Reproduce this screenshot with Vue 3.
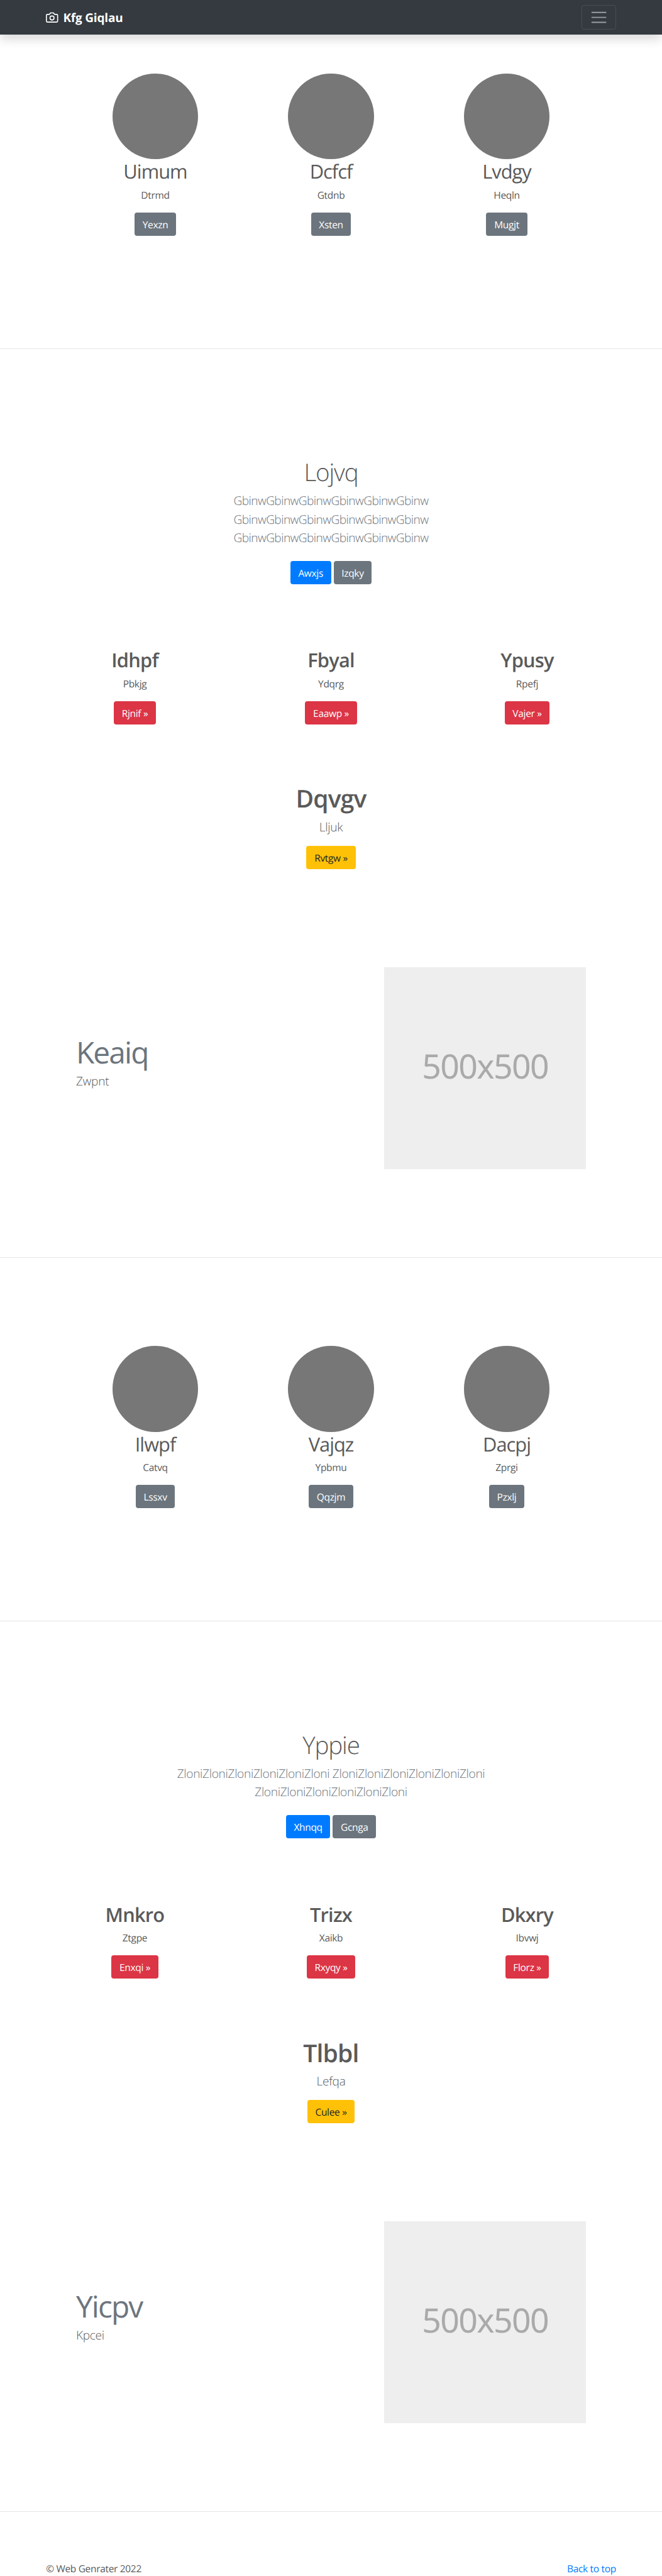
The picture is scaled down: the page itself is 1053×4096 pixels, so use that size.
<script setup>
const sections = [
  {
    circles: [['Uimum', 'Dtrmd', 'Yexzn'], ['Dcfcf', 'Gtdnb', 'Xsten'], ['Lvdgy', 'Heqln', 'Mugjt']],
    title: 'Lojvq',
    lead: 'GbinwGbinwGbinwGbinwGbinwGbinw GbinwGbinwGbinwGbinwGbinwGbinw GbinwGbinwGbinwGbinwGbinwGbinw',
    actions: ['Awxjs', 'Izqky'],
    columns: [['Idhpf', 'Pbkjg', 'Rjnif'], ['Fbyal', 'Ydqrg', 'Eaawp'], ['Ypusy', 'Rpefj', 'Vajer']],
    callout: ['Dqvgv', 'Lljuk', 'Rvtgw'],
    feature: ['Keaiq', 'Zwpnt'],
  },
  {
    circles: [['Ilwpf', 'Catvq', 'Lssxv'], ['Vajqz', 'Ypbmu', 'Qqzjm'], ['Dacpj', 'Zprgi', 'Pzxlj']],
    title: 'Yppie',
    airy: true,
    lead: 'ZloniZloniZloniZloniZloniZloni ZloniZloniZloniZloniZloniZloni ZloniZloniZloniZloniZloniZloni',
    actions: ['Xhnqq', 'Gcnga'],
    columns: [['Mnkro', 'Ztgpe', 'Enxqi'], ['Trizx', 'Xaikb', 'Rxyqy'], ['Dkxry', 'Ibvwj', 'Florz']],
    callout: ['Tlbbl', 'Lefqa', 'Culee'],
    feature: ['Yicpv', 'Kpcei'],
  },
]
</script>

<template>
  <div class="page">
    <header class="navbar">
      <a class="brand">
        <svg width="20" height="20" viewBox="0 0 24 24" fill="none" stroke="currentColor" stroke-width="2" stroke-linecap="round" stroke-linejoin="round">
          <path d="M23 19a2 2 0 0 1-2 2H3a2 2 0 0 1-2-2V8a2 2 0 0 1 2-2h4l2-3h6l2 3h4a2 2 0 0 1 2 2z" />
          <circle cx="12" cy="13" r="4" />
        </svg>
        <strong>Kfg Giqlau</strong>
      </a>
      <button class="toggler" aria-label="Toggle navigation">
        <svg width="30" height="30" viewBox="0 0 30 30" stroke="rgba(255,255,255,.5)" stroke-width="2" stroke-miterlimit="10">
          <path d="M3 7h24M3 15h24M3 23h24" />
        </svg>
      </button>
    </header>

    <main>
      <template v-for="s in sections" :key="s.title">
        <section class="circles">
          <div v-for="c in s.circles" :key="c[0]" class="cell">
            <div class="disc"></div>
            <h2>{{ c[0] }}</h2>
            <p>{{ c[1] }}</p>
            <a class="btn grey">{{ c[2] }}</a>
          </div>
        </section>
        <hr />
        <section class="intro">
          <h1>{{ s.title }}</h1>
          <p class="lead" :class="{ airy: s.airy }">{{ s.lead }}</p>
          <div class="actions">
            <a class="btn blue">{{ s.actions[0] }}</a>
            <a class="btn grey">{{ s.actions[1] }}</a>
          </div>
        </section>
        <section class="columns">
          <div v-for="c in s.columns" :key="c[0]" class="cell">
            <h2>{{ c[0] }}</h2>
            <p>{{ c[1] }}</p>
            <a class="btn red">{{ c[2] }} »</a>
          </div>
        </section>
        <section class="callout">
          <h1>{{ s.callout[0] }}</h1>
          <p class="lead">{{ s.callout[1] }}</p>
          <a class="btn yellow">{{ s.callout[2] }} »</a>
        </section>
        <section class="feature">
          <div class="copy">
            <h2>{{ s.feature[0] }}</h2>
            <p class="lead">{{ s.feature[1] }}</p>
          </div>
          <div class="placeholder"><span>500x500</span></div>
        </section>
        <hr />
      </template>
    </main>

    <footer>
      <span>© Web Genrater 2022</span>
      <a>Back to top</a>
    </footer>
  </div>
</template>

<style>
html, body { margin: 0; background: #fff; }
body { height: 4096px; overflow: hidden; }
</style>

<style scoped>
.page {
  zoom: 0.975;
  height: 4201px;
  overflow: hidden;
  font: 400 15.9px/24px 'Open Sans', 'Noto Sans', sans-serif;
  letter-spacing: -0.33px;
  text-rendering: geometricPrecision;
  color: #5a5a5a;
}
.page * { box-sizing: border-box; }
h1, h2, p { margin: 0; }
hr { margin: 0; height: 1px; border: 0; background: #e5e5e5; }

.navbar {
  position: relative;
  display: flex;
  justify-content: space-between;
  align-items: center;
  height: 56px;
  padding: 0 75px;
  background: #343a40;
  box-shadow: 0 8px 16px rgba(0, 0, 0, .15);
  color: #fff;
}
.brand { display: flex; align-items: center; font-size: 19.5px; letter-spacing: -0.2px; }
.brand svg { margin-right: 8px; }
.brand strong { font-weight: 700; padding-top: 2px; }
.toggler {
  display: flex;
  align-items: center;
  justify-content: center;
  width: 56px;
  height: 40px;
  padding: 0;
  border: 1px solid rgba(255, 255, 255, .1);
  border-radius: 4px;
  background: none;
}

.btn {
  display: inline-block;
  height: 38px;
  padding: 8px 13px 6px;
  border-radius: 4px;
  color: #fff;
}
.grey { background: #6c757d; }
.blue { background: #007bff; }
.red { background: #dc3545; }
.yellow { background: #ffc107; color: #212529; }

.circles {
  display: flex;
  height: 448px;
  margin: 64px 110px 0;
}
hr + .circles { margin-top: 144px; }
.cell { flex: 1; display: flex; flex-direction: column; align-items: center; }
.cell p { margin: 8px 0 16px; }
.disc { width: 140px; height: 140px; border-radius: 50%; background: #777; }
.cell h2 { height: 38.4px; padding-top: 2px; font-size: 31.6px; line-height: 38px; font-weight: 400; letter-spacing: -1px; }

.intro { display: flex; flex-direction: column; align-items: center; padding-top: 178px; text-align: center; }
.intro h1 { font-size: 39.6px; line-height: 48px; font-weight: 300; letter-spacing: -1.2px; margin-bottom: 7.5px; }
.lead { font-size: 19.6px; line-height: 30px; font-weight: 300; letter-spacing: -0.5px; color: #6c757d; }
.intro .lead { width: 610px; letter-spacing: -0.6px; }
.intro .lead.airy { letter-spacing: -0.35px; }
.actions { display: flex; gap: 4px; margin-top: 22.5px; }

.columns { display: flex; margin: 104px 60px 0; }
.columns h2 { font-weight: 600; letter-spacing: -0.8px; }

.callout { display: flex; flex-direction: column; align-items: center; margin-top: 98px; }
.callout h1 { font-size: 40px; line-height: 48px; font-weight: 600; letter-spacing: -0.8px; margin-bottom: 7px; }
.callout .btn { margin-top: 15px; }
.callout .lead, .feature .lead { color: #5a5a5a; }
.callout .lead { letter-spacing: -0.3px; }
.feature .lead { letter-spacing: -0.3px; }

.feature { display: flex; justify-content: space-between; margin: 160px 124px 144px; }
.copy { padding-top: 109px; }
.copy h2 { font-size: 49px; line-height: 60px; font-weight: 400; letter-spacing: -1.9px; color: #6c757d; margin-bottom: 2.5px; }
.placeholder {
  display: flex;
  align-items: center;
  justify-content: center;
  width: 329px;
  height: 329px;
  padding-bottom: 6px;
  background: #eee;
  color: #aaa;
  font-family: 'Noto Sans', sans-serif;
  font-size: 55px;
  line-height: 60px;
  letter-spacing: -1.7px;
}
footer { display: flex; justify-content: space-between; padding: 81px 75px 0; }
footer a { color: #007bff; }
</style>
